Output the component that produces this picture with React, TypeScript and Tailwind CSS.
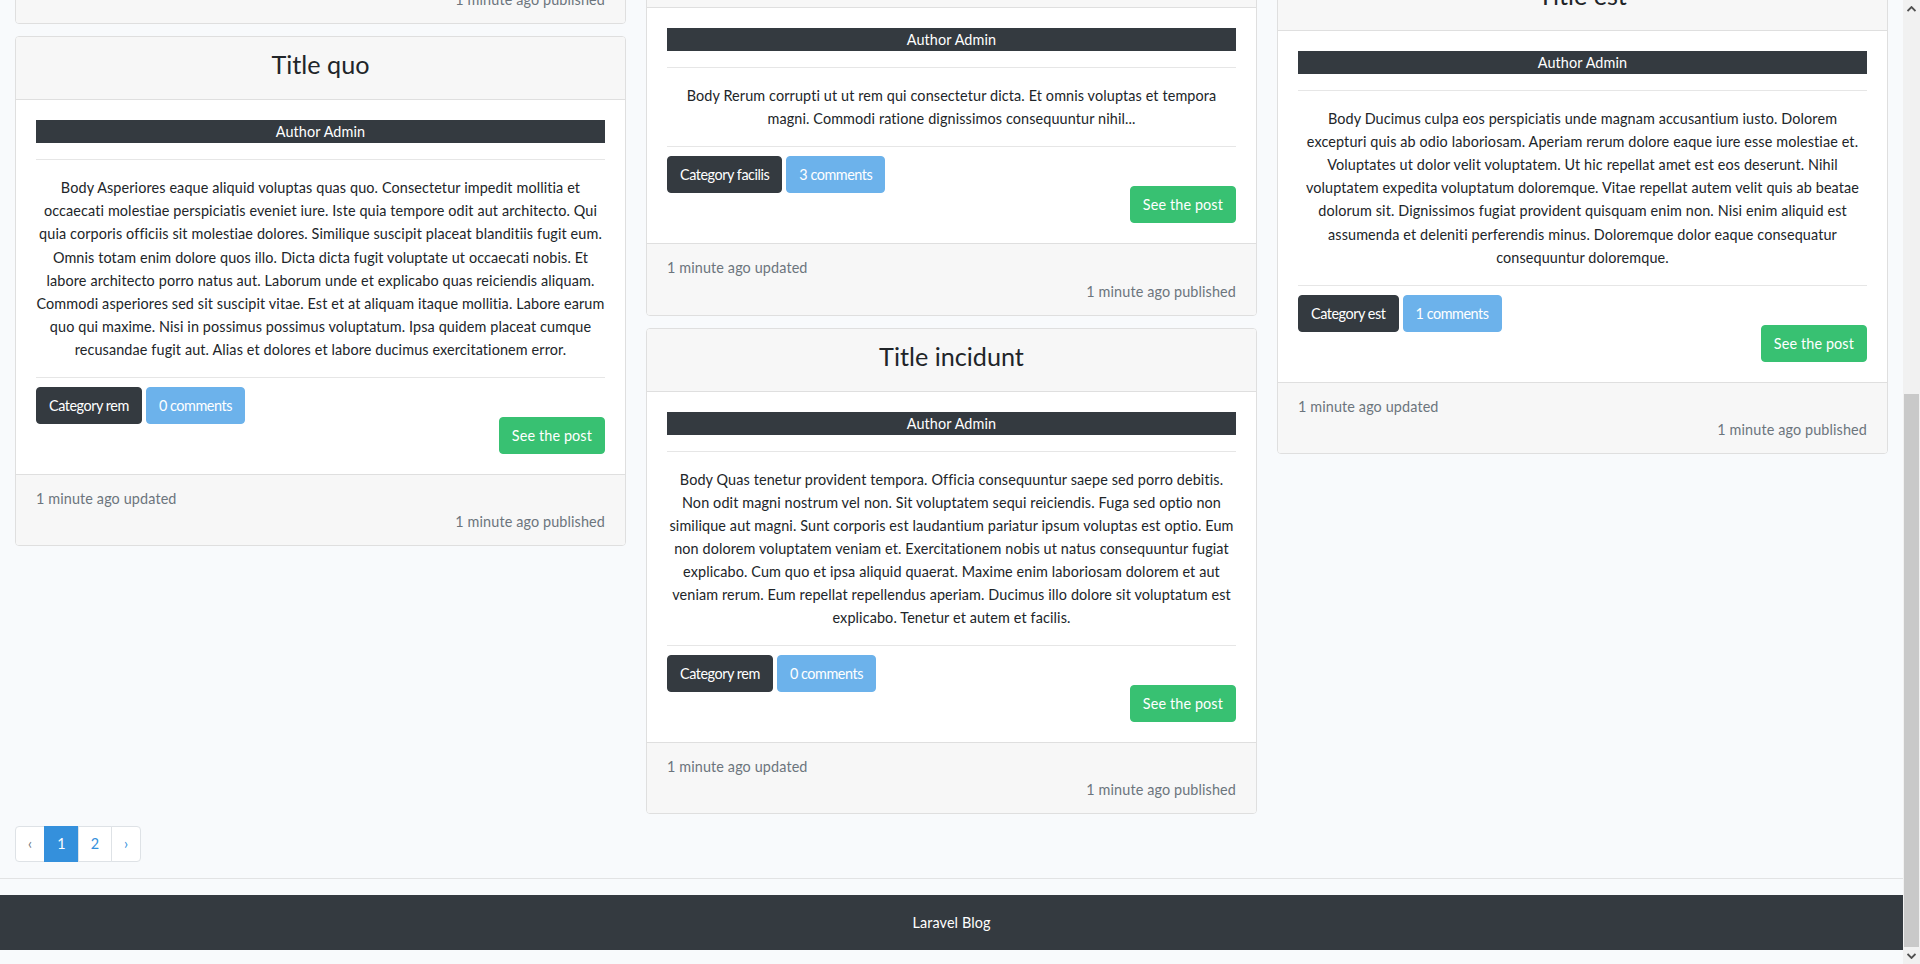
import React from "react";

type CardProps = {
  title?: string;
  lines?: string[];
  category?: string;
  comments?: string;
  className?: string;
  footerOnly?: boolean;
};

function Hr({ className = "" }: { className?: string }) {
  return <div className={"h-px bg-[#e6e6e6] " + className} />;
}

function CardFooter({ border = true }: { border?: boolean }) {
  return (
    <div
      className={
        "bg-[#f7f7f7] px-5 py-3 text-[#6c757d] " +
        (border ? "border-t border-[#dfdfdf]" : "")
      }
    >
      <div>1 minute ago updated</div>
      <div className="text-right">1 minute ago published</div>
    </div>
  );
}

function Card({ title, lines = [], category, comments, className = "", footerOnly }: CardProps) {
  if (footerOnly) {
    return (
      <div className={"mb-3 overflow-hidden rounded border border-[#dfdfdf] bg-white " + className}>
        <CardFooter border={false} />
      </div>
    );
  }
  return (
    <div className={"mb-3 overflow-hidden rounded border border-[#dfdfdf] bg-white " + className}>
      <div className="border-b border-[#dfdfdf] bg-[#f7f7f7] px-5 py-3 text-center">
        <h3 className="mb-2 text-[25.2px] font-normal leading-[1.2] tracking-normal text-[#212529]">{title}</h3>
      </div>
      <div className="p-5">
        <div className="bg-[#343a40] text-center text-white">Author Admin</div>
        <Hr className="my-4" />
        <div className="text-center">
          {lines.map((l, i) => (
            <div key={i} className="whitespace-nowrap">
              {l}
            </div>
          ))}
        </div>
        <Hr className="mt-4 mb-[9px]" />
        <div className="flex gap-[4px] tracking-[-0.45px]">
          <span className="rounded border border-[#343a40] bg-[#343a40] px-3 py-[6px] text-white">
            {category}
          </span>
          <span className="rounded border border-[#6cb2eb] bg-[#6cb2eb] px-3 py-[6px] text-white">
            {comments}
          </span>
        </div>
        <div className="-mt-[7px] flex justify-end">
          <span className="rounded border border-[#38c172] bg-[#38c172] px-3 py-[6px] text-white">
            See the post
          </span>
        </div>
      </div>
      <CardFooter />
    </div>
  );
}

function Chevron({ up }: { up?: boolean }) {
  return (
    <svg width="9" height="6" viewBox="0 0 9 6" className={up ? "" : "rotate-180"}>
      <path d="M0.5 5 L4.5 1 L8.5 5" fill="none" stroke="#505050" strokeWidth="1.8" />
    </svg>
  );
}

function Scrollbar() {
  return (
    <div className="flex h-full w-[17px] shrink-0 flex-col bg-[#f1f1f1]">
      <div className="flex h-[17px] items-center justify-center">
        <Chevron up />
      </div>
      <div className="h-[377px]" />
      <div className="mx-px flex-1 bg-[#c9c9c9]" />
      <div className="flex h-[17px] items-center justify-center">
        <Chevron />
      </div>
    </div>
  );
}

export default function App() {
  return (
    <div className="flex h-[964px] w-[1920px] overflow-hidden bg-[#f8fafc] font-['Lato','Liberation_Sans',sans-serif] text-[14.4px] leading-[23.04px] tracking-[0.12px] text-[#212529]">
      <div className="flex min-w-0 flex-1 flex-col">
        <div className="grid grid-cols-3 items-start gap-x-5 px-[15px]">
          {/* Column 1 */}
          <div className="flex flex-col">
            <Card footerOnly className="-mt-[48px]" />
            <Card
              title="Title quo"
              lines={[
                "Body Asperiores eaque aliquid voluptas quas quo. Consectetur impedit mollitia et",
                "occaecati molestiae perspiciatis eveniet iure. Iste quia tempore odit aut architecto. Qui",
                "quia corporis officiis sit molestiae dolores. Similique suscipit placeat blanditiis fugit eum.",
                "Omnis totam enim dolore quos illo. Dicta dicta fugit voluptate ut occaecati nobis. Et",
                "labore architecto porro natus aut. Laborum unde et explicabo quas reiciendis aliquam.",
                "Commodi asperiores sed sit suscipit vitae. Est et at aliquam itaque mollitia. Labore earum",
                "quo qui maxime. Nisi in possimus possimus voluptatum. Ipsa quidem placeat cumque",
                "recusandae fugit aut. Alias et dolores et labore ducimus exercitationem error.",
              ]}
              category="Category rem"
              comments="0 comments"
            />
          </div>
          {/* Column 2 */}
          <div className="flex flex-col">
            <Card
              className="-mt-[56px]"
              title="Title facilis"
              lines={[
                "Body Rerum corrupti ut ut rem qui consectetur dicta. Et omnis voluptas et tempora",
                "magni. Commodi ratione dignissimos consequuntur nihil...",
              ]}
              category="Category facilis"
              comments="3 comments"
            />
            <Card
              title="Title incidunt"
              lines={[
                "Body Quas tenetur provident tempora. Officia consequuntur saepe sed porro debitis.",
                "Non odit magni nostrum vel non. Sit voluptatem sequi reiciendis. Fuga sed optio non",
                "similique aut magni. Sunt corporis est laudantium pariatur ipsum voluptas est optio. Eum",
                "non dolorem voluptatem veniam et. Exercitationem nobis ut natus consequuntur fugiat",
                "explicabo. Cum quo et ipsa aliquid quaerat. Maxime enim laboriosam dolorem et aut",
                "veniam rerum. Eum repellat repellendus aperiam. Ducimus illo dolore sit voluptatum est",
                "explicabo. Tenetur et autem et facilis.",
              ]}
              category="Category rem"
              comments="0 comments"
            />
          </div>
          {/* Column 3 */}
          <div className="flex flex-col">
            <Card
              className="-mt-[33px]"
              title="Title est"
              lines={[
                "Body Ducimus culpa eos perspiciatis unde magnam accusantium iusto. Dolorem",
                "excepturi quis ab odio laboriosam. Aperiam rerum dolore eaque iure esse molestiae et.",
                "Voluptates ut dolor velit voluptatem. Ut hic repellat amet est eos deserunt. Nihil",
                "voluptatem expedita voluptatum doloremque. Vitae repellat autem velit quis ab beatae",
                "dolorum sit. Dignissimos fugiat provident quisquam enim non. Nisi enim aliquid est",
                "assumenda et deleniti perferendis minus. Doloremque dolor eaque consequatur",
                "consequuntur doloremque.",
              ]}
              category="Category est"
              comments="1 comments"
            />
          </div>
        </div>

        {/* Pagination */}
        <div className="px-[15px]">
          <ul className="flex text-[14.4px] leading-[18px]">
            <li className="rounded-l border border-[#dee2e6] bg-white px-3 py-2 text-[#6c757d]">‹</li>
            <li className="-ml-px border border-[#3490dc] bg-[#3490dc] px-3 py-2 text-white">1</li>
            <li className="-ml-px border border-[#dee2e6] bg-white px-3 py-2 text-[#3490dc]">2</li>
            <li className="-ml-px rounded-r border border-[#dee2e6] bg-white px-3 py-2 text-[#3490dc]">›</li>
          </ul>
        </div>

        <div className="mt-4 mb-4 h-px bg-[#e2e3e4]" />

        <footer className="bg-[#343a40] py-4 text-center text-white">Laravel Blog</footer>
      </div>
      <Scrollbar />
    </div>
  );
}
